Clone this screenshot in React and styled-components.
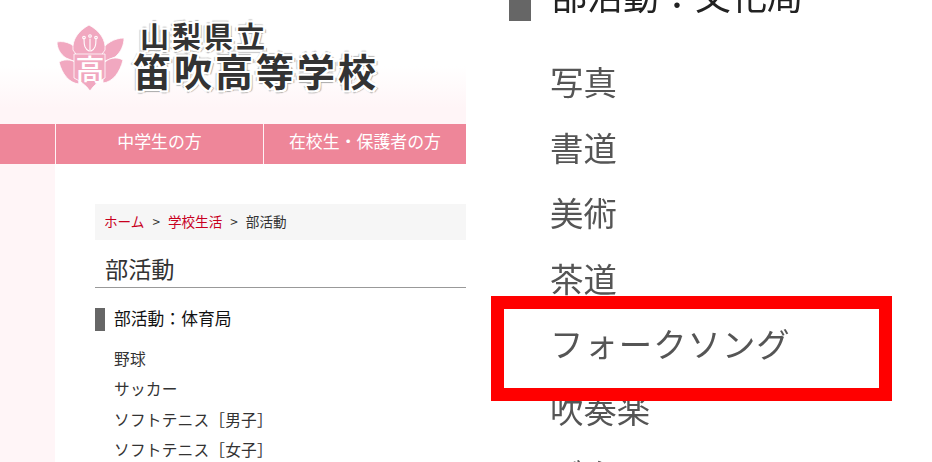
import React from "react";
import styled, { createGlobalStyle } from "styled-components";

const FONT = `"Noto Sans CJK JP", "Noto Sans", sans-serif`;

const Global = createGlobalStyle`
  html, body { margin: 0; padding: 0; background: #fff; overflow: hidden; }
  #root { width: 932px; height: 462px; }
  * { box-sizing: border-box; }
`;

const Page = styled.div`
  display: grid;
  grid-template-columns: 466px 466px;
  width: 932px;
  height: 462px;
  overflow: hidden;
  font-family: ${FONT};
  background: #fff;
`;

const LeftPane = styled.div`
  display: flex;
  flex-direction: column;
  height: 462px;
  overflow: hidden;
`;

const Header = styled.header`
  flex: none;
  display: flex;
  align-items: flex-start;
  gap: 6px;
  height: 124px;
  padding: 23px 0 0 56px;
  background: linear-gradient(#ffffff 0, #ffffff 66px, #fff5f7 108px);
`;

const LogoText = styled.div`
  display: flex;
  flex-direction: column;
  margin-top: -3px;
`;

const halo = `
  -2px 0 0 #fff, 2px 0 0 #fff, 0 -2px 0 #fff, 0 2px 0 #fff,
  -2px -2px 0 #fff, 2px -2px 0 #fff, -2px 2px 0 #fff, 2px 2px 0 #fff,
  3px 2px 1px #aaa, -3px 0 1px #bbb, 0 -3px 1px #bbb, 0 3px 1px #aaa
`;

const Prefecture = styled.div`
  font-size: 29px;
  line-height: 30px;
  font-weight: 700;
  letter-spacing: 3px;
  color: #333;
  padding-left: 8px;
  text-shadow: ${halo};
`;

const SchoolName = styled.div`
  font-size: 38px;
  line-height: 40px;
  font-weight: 700;
  letter-spacing: 3px;
  color: #333;
  padding-left: 1px;
  white-space: nowrap;
  text-shadow: ${halo};
`;

const Nav = styled.nav`
  flex: none;
  display: grid;
  grid-template-columns: 55px 1px 207px 1px 202px;
  height: 40px;
  background: #ee8699;
`;

const NavDivider = styled.span`
  background: #fff;
  opacity: 0.9;
`;

const NavItem = styled.a`
  display: flex;
  align-items: center;
  justify-content: center;
  padding-bottom: 7px;
  color: #fff;
  font-size: 16.9px;
  white-space: nowrap;
`;

const Body = styled.div`
  display: grid;
  grid-template-columns: 55px 1fr;
  flex: 1;
  min-height: 0;
`;

const SideStrip = styled.div`
  background: #fff5f7;
`;

const Main = styled.main`
  padding: 40px 0 0 40px;
`;

const Crumbs = styled.div`
  display: flex;
  align-items: center;
  gap: 8px;
  height: 36px;
  padding: 0 0 3px 9px;
  background: #f6f6f6;
  font-size: 13.6px;
  color: #333;
`;

const CrumbLink = styled.a`
  color: #c8001e;
`;

const PageTitle = styled.h1`
  margin: 14px 0 0;
  height: 34px;
  padding-left: 10px;
  border-bottom: 1px solid #999;
  font-size: 23.2px;
  line-height: 28px;
  font-weight: 400;
  color: #333;
`;

const SectionHead = styled.h2`
  display: flex;
  align-items: center;
  gap: 9px;
  height: 23px;
  margin: 20px 0 0;
  font-size: 16.8px;
  font-weight: 400;
  color: #111;
  &::before {
    content: "";
    width: 10px;
    height: 23px;
    background: #666;
  }
`;

const SectionLabel = styled.span`
  margin-top: -4px;
`;

const SmallList = styled.ul`
  list-style: none;
  margin: 13px 0 0;
  padding: 0 0 0 19px;
`;

const SmallItem = styled.li`
  height: 30.4px;
  line-height: 30.4px;
  font-size: 15.7px;
  letter-spacing: 0.2px;
  color: #333;
  white-space: nowrap;
`;

const RightPane = styled.div`
  position: relative;
  height: 462px;
  overflow: hidden;
  padding-left: 43px;
  filter: blur(0.4px);
`;

const ZoomHead = styled.h2`
  display: flex;
  align-items: center;
  gap: 20px;
  height: 46px;
  margin: -25px 0 0;
  font-size: 36px;
  line-height: 46px;
  font-weight: 400;
  color: #222;
  white-space: nowrap;
  &::before {
    content: "";
    flex: none;
    width: 22px;
    height: 46px;
    background: #666;
  }
`;

const ZoomLabel = styled.span`
  margin-top: -9px;
`;

const ZoomList = styled.ul`
  list-style: none;
  margin: 27px 0 0;
  padding: 0 0 0 41px;
`;

const ZoomItem = styled.li`
  height: 65.6px;
  line-height: 65.6px;
  font-size: 33.4px;
  letter-spacing: ${(p) => (p.$wide ? "1px" : "0")};
  color: #555;
  white-space: nowrap;
  &:last-child {
    margin-top: -1px;
  }
`;

const Highlight = styled.div`
  position: absolute;
  left: 25px;
  top: 296px;
  width: 401px;
  height: 105px;
  border: 13px solid #ff0000;
`;

const EmblemSvg = styled.svg`
  flex: none;
  width: 70px;
  height: 70px;
`;

const Emblem = () => (
  <EmblemSvg viewBox="56 23 70 70" aria-hidden="true">
    <g fill="#f1a8c0" stroke="#fff" strokeWidth="0.8">
      <path d="M57 42 C66 40 76 45 81 55 L76 62 L66 58 C60 54 57 48 57 42 Z" />
      <path d="M124 38 C115 38 105 43 100 53 L105 61 L115 57 C121 52 124 45 124 38 Z" />
      <path d="M59 62 C66 58 74 60 79 65 L79 84 C69 83 62 74 59 62 Z" />
      <path d="M123 60 C116 56 108 58 103 64 L103 83 C113 82 120 72 123 60 Z" />
      <path d="M89 25 C100 31 106 40 105 50 L100 57 L78 57 L73 50 C72 40 78 31 89 25 Z" />
      <path d="M74 54 L105 54 L105 78 C99 81 94 85 90 91 C86 85 80 81 74 78 Z" />
    </g>
    <g fill="none" stroke="#fff" strokeWidth="1.1" strokeLinecap="round">
      <path d="M90 39 V51" />
      <path d="M84 39 C84 46 85 49 89 51" />
      <path d="M96 39 C96 46 95 49 91 51" />
      <circle cx="84" cy="37.5" r="1.3" />
      <circle cx="90" cy="36" r="1.3" />
      <circle cx="96" cy="37.5" r="1.3" />
    </g>
    <text x="90" y="81" textAnchor="middle" fontFamily={FONT} fontSize="29" fontWeight="500" fill="#fff">高</text>
  </EmblemSvg>
);

export default function App() {
  return (
    <Page>
      <Global />
      <LeftPane>
        <Header>
          <Emblem />
          <LogoText>
            <Prefecture>山梨県立</Prefecture>
            <SchoolName>笛吹高等学校</SchoolName>
          </LogoText>
        </Header>
        <Nav>
          <span />
          <NavDivider />
          <NavItem>中学生の方</NavItem>
          <NavDivider />
          <NavItem>在校生・保護者の方</NavItem>
        </Nav>
        <Body>
          <SideStrip />
          <Main>
            <Crumbs>
              <CrumbLink>ホーム</CrumbLink>
              <span>&gt;</span>
              <CrumbLink>学校生活</CrumbLink>
              <span>&gt;</span>
              <span>部活動</span>
            </Crumbs>
            <PageTitle>部活動</PageTitle>
            <SectionHead>
              <SectionLabel>部活動：体育局</SectionLabel>
            </SectionHead>
            <SmallList>
              <SmallItem>野球</SmallItem>
              <SmallItem>サッカー</SmallItem>
              <SmallItem>ソフトテニス［男子］</SmallItem>
              <SmallItem>ソフトテニス［女子］</SmallItem>
            </SmallList>
          </Main>
        </Body>
      </LeftPane>
      <RightPane>
        <ZoomHead>
          <ZoomLabel>部活動：文化局</ZoomLabel>
        </ZoomHead>
        <ZoomList>
          <ZoomItem>写真</ZoomItem>
          <ZoomItem>書道</ZoomItem>
          <ZoomItem>美術</ZoomItem>
          <ZoomItem>茶道</ZoomItem>
          <ZoomItem $wide>フォークソング</ZoomItem>
          <ZoomItem>吹奏楽</ZoomItem>
          <ZoomItem>ギター</ZoomItem>
        </ZoomList>
        <Highlight />
      </RightPane>
    </Page>
  );
}
